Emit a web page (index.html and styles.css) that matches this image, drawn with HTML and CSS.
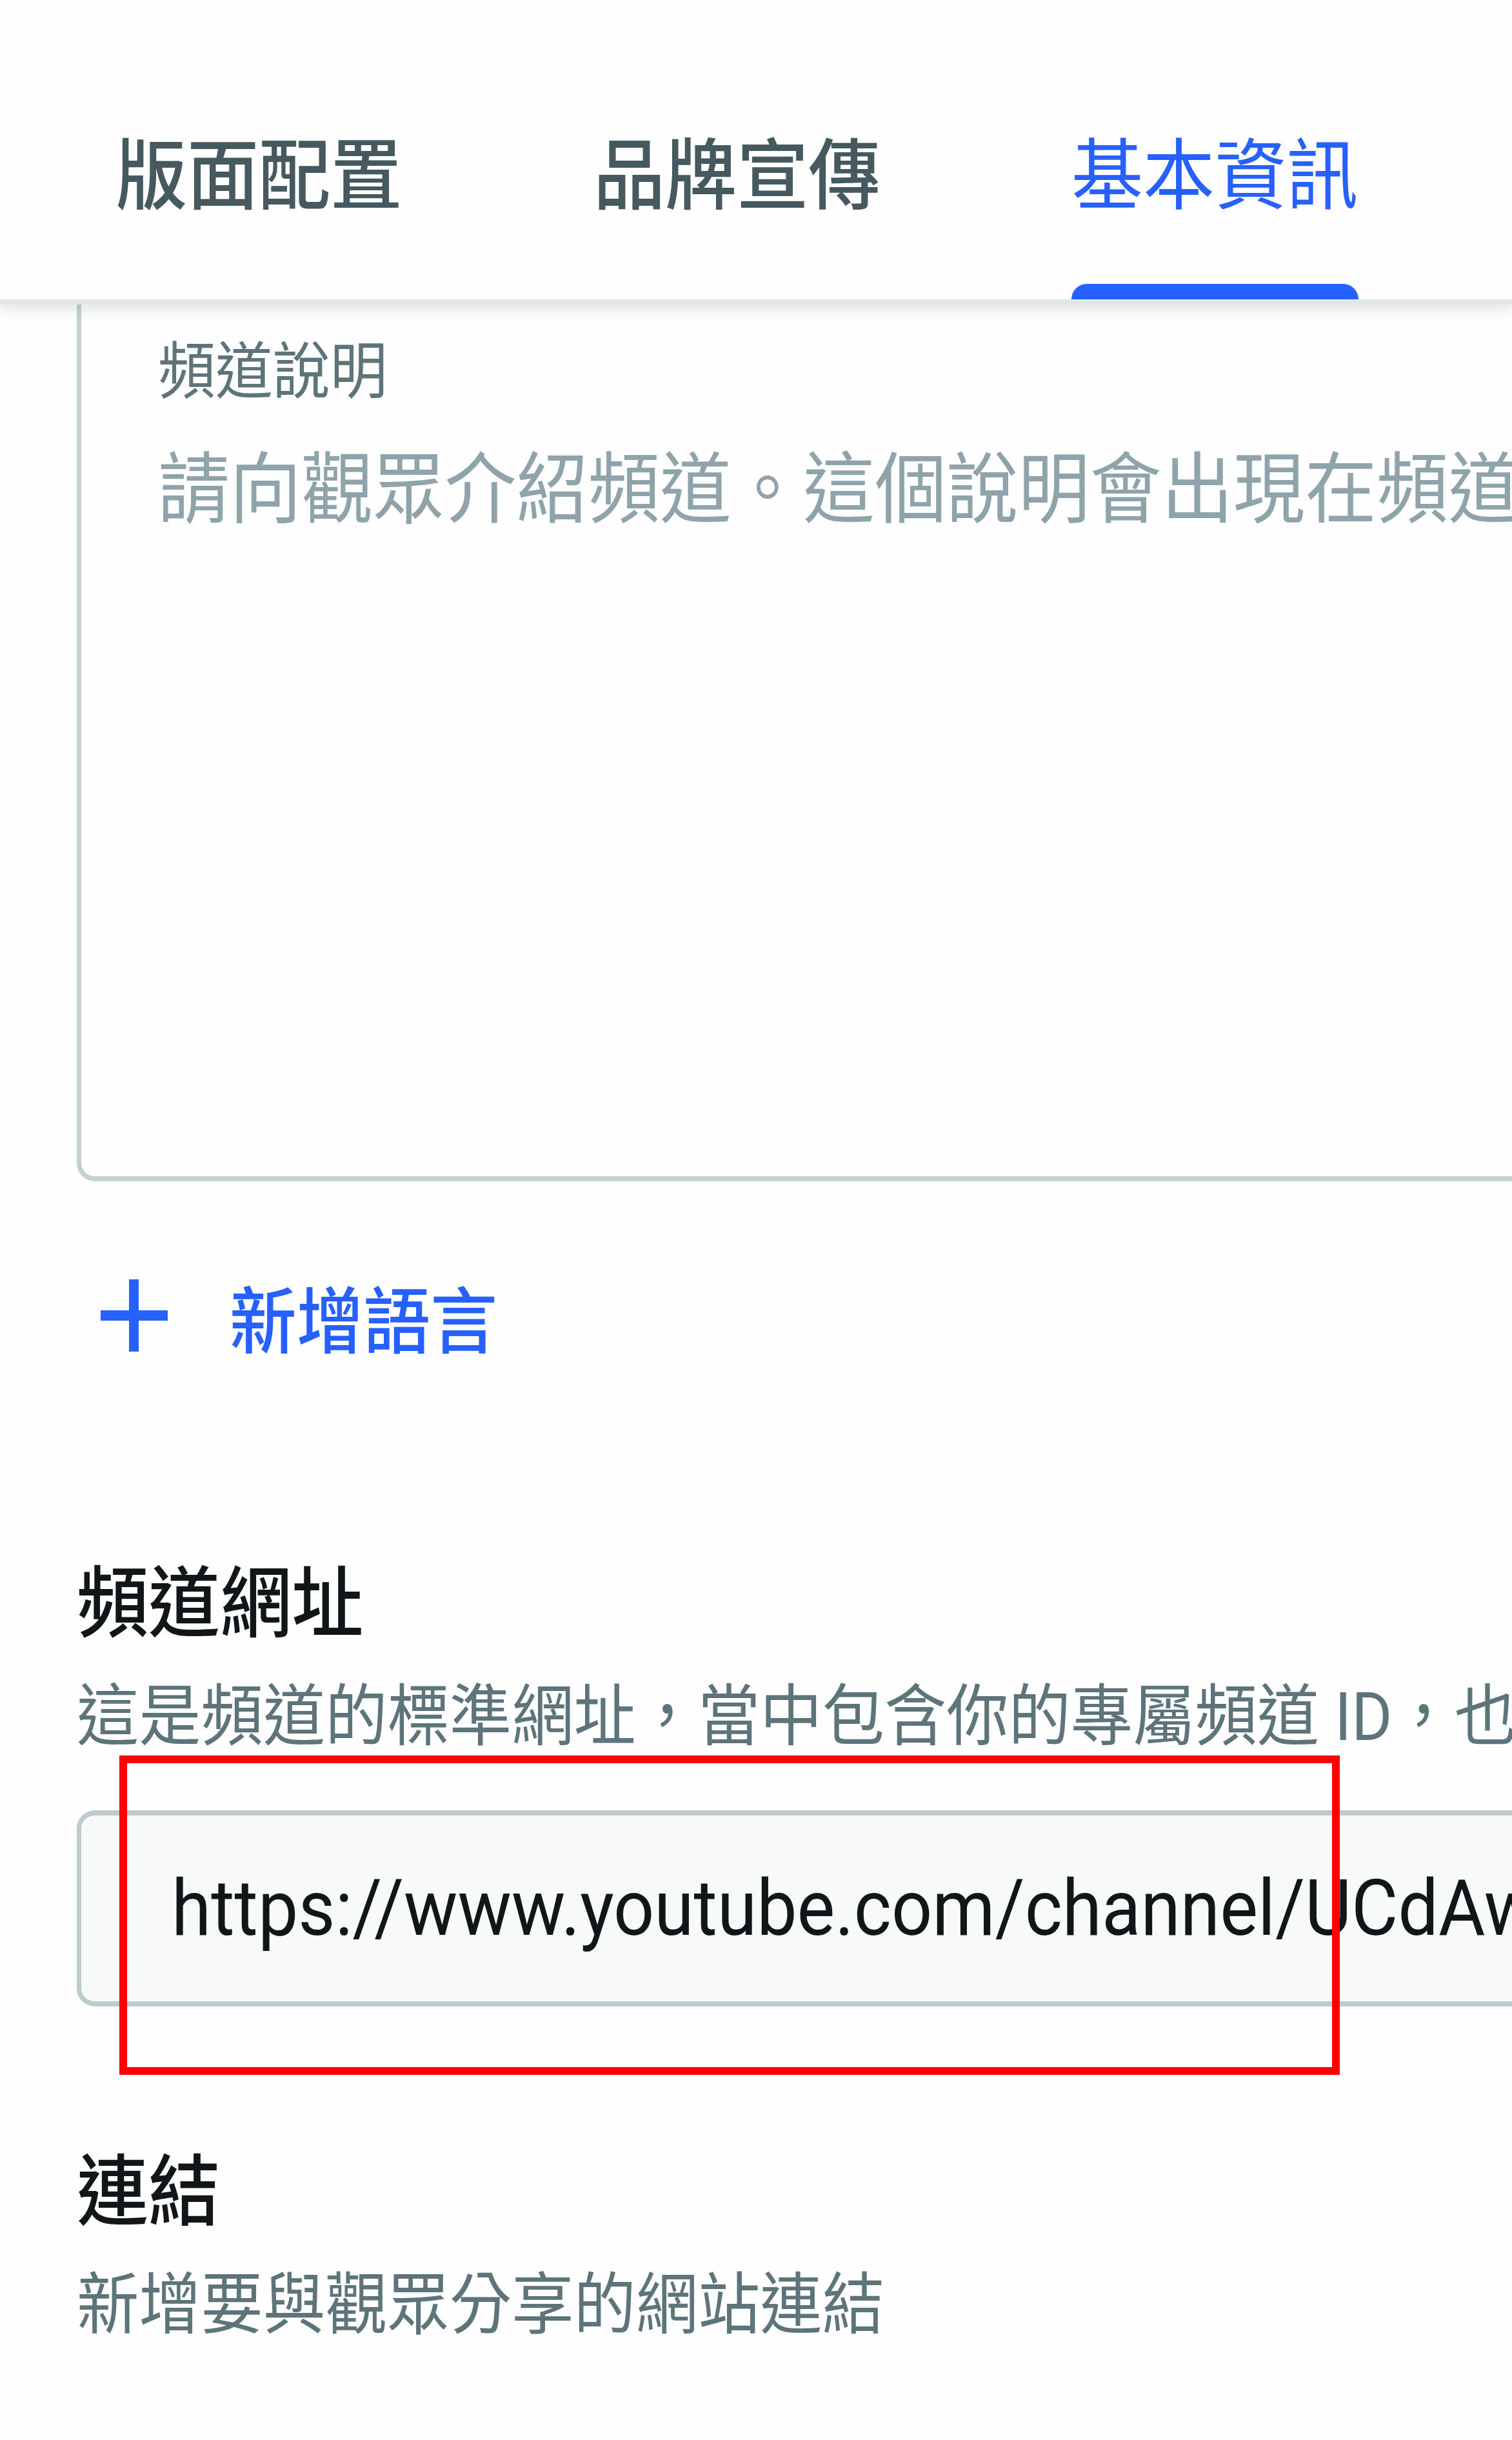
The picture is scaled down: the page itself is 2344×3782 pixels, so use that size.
FILE: index.html
```
<!DOCTYPE html>
<html lang="zh-Hant">
<head>
    <meta charset="UTF-8">
    <meta name="viewport" content="width=device-width, initial-scale=1.0">
    <title>基本資訊</title>
    <link rel="stylesheet" href="styles.css">
</head>
<body>
    <nav class="tabs">
        <a class="tab"><span class="text">版面配置</span></a>
        <a class="tab"><span class="text">品牌宣傳</span></a>
        <a class="tab active"><span class="text">基本資訊</span></a>
    </nav>

    <main>
        <div class="description">
            <div class="label text">頻道說明</div>
            <div class="placeholder text">請向觀眾介紹頻道。這個說明會出現在頻道</div>
        </div>

        <div class="add-language">
            <svg class="plus" width="104" height="112" viewBox="0 0 104 112">
                <path d="M44 0h15v48h45v16H59v48H44V64H0V48h44z" fill="#2660ff"/>
            </svg>
            <span class="text">新增語言</span>
        </div>

        <section class="channel-url">
            <h2 class="text">頻道網址</h2>
            <p class="text">這是頻道的標準網址，當中包含你的專屬頻道 ID，也</p>
            <div class="url-box">
                <span class="text">https://www.youtube.com/channel/UCdAw</span>
            </div>
            <div class="highlight"></div>
        </section>

        <section class="links">
            <h2 class="text">連結</h2>
            <p class="text">新增要與觀眾分享的網站連結</p>
        </section>
    </main>
</body>
</html>
```
FILE: styles.css
```
* {
    box-sizing: border-box;
}

body {
    margin: 0;
    height: 3782px;
    overflow: hidden;
    background-color: #fefefe;
    font-family: Roboto, "Noto Sans CJK TC", sans-serif;
    font-size: 120px;
    line-height: 1;
    color: #111718;
}

/* slightly condensed lettering */
.text {
    display: block;
    white-space: nowrap;
    transform: scaleX(0.926);
    transform-origin: 0 0;
}

.tabs {
    position: relative;
    display: flex;
    gap: 296px;
    height: 472px;
    padding-left: 179px;
    border-bottom: 8px solid #e0e8e7;
    box-shadow: 0 8px 20px rgba(20, 40, 50, 0.12);
    background-color: #fefefe;
}

.tab {
    display: flex;
    flex-direction: column;
    justify-content: space-between;
    width: 445px;
    padding-top: 214px;
    font-weight: 500;
    color: #46595f;
}

.tab.active {
    font-weight: 400;
    color: #2660ff;
}

.tab.active::after {
    content: "";
    height: 24px;
    border-radius: 24px 24px 0 0;
    background-color: #2660ff;
}

main {
    padding-left: 119px;
}

.description {
    height: 1359px;
    padding: 56px 0 0 119px;
    border-left: 7px solid #c4d1d2;
    border-bottom: 8px solid #c4d1d2;
    border-bottom-left-radius: 28px;
}

.label {
    font-size: 96px;
    color: #5d747a;
}

.placeholder {
    margin-top: 76px;
    color: #8fa3aa;
}

.add-language {
    display: flex;
    gap: 96px;
    height: 122px;
    margin-top: 152px;
    padding-left: 37px;
    font-size: 112px;
    font-weight: 500;
    color: #2660ff;
}

.add-language .text {
    margin-top: 12px;
}

.channel-url {
    position: relative;
    margin-top: 322px;
}

h2 {
    margin: 0;
    font-size: 120px;
    font-weight: 500;
}

p {
    margin: 63px 0 0;
    font-size: 104px;
    color: #5d747a;
}

.url-box {
    display: flex;
    align-items: center;
    height: 304px;
    margin-top: 92px;
    padding-left: 140px;
    border: 8px solid #bccbce;
    border-width: 8px 0 8px 7px;
    border-radius: 28px 0 0 28px;
    background-color: #f8faf9;
}

.highlight {
    position: absolute;
    top: 294px;
    left: 66px;
    width: 1892px;
    height: 495px;
    border: 12px solid #ff0000;
}

.links {
    margin-top: 229px;
}
```
